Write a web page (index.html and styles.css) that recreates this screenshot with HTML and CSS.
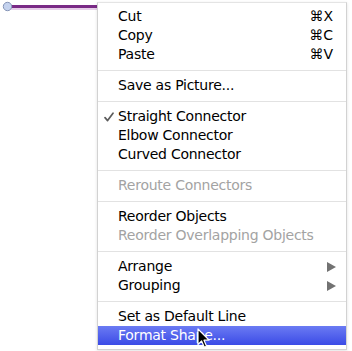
FILE: index.html
```html
<!DOCTYPE html>
<html>
<head>
<meta charset="utf-8">
<link rel="stylesheet" href="styles.css">
</head>
<body>
<div class="canvas">
  <svg class="connector" width="120" height="14" viewBox="0 0 120 14">
    <rect x="8" y="8" width="112" height="2" fill="#e6cfe9"/>
    <rect x="8" y="5" width="112" height="3" fill="#7a2a86"/>
    <circle cx="7.5" cy="6.5" r="4.2" fill="#c4d2ee" stroke="#8594b6" stroke-width="1"/>
  </svg>
  <div class="menu">
    <div class="item"><span class="check"></span><span class="label">Cut</span><span class="key">⌘X</span></div>
    <div class="item"><span class="check"></span><span class="label">Copy</span><span class="key">⌘C</span></div>
    <div class="item"><span class="check"></span><span class="label">Paste</span><span class="key">⌘V</span></div>
    <div class="sep"></div>
    <div class="item"><span class="check"></span><span class="label">Save as Picture...</span></div>
    <div class="sep"></div>
    <div class="item"><span class="check"><svg class="tick" width="10" height="10" viewBox="0 0 10 10"><path d="M1 5.6 L3.6 8.6 L9 1.2" fill="none" stroke="#5c5c5c" stroke-width="1.7" stroke-linecap="round" stroke-linejoin="round"/></svg></span><span class="label">Straight Connector</span></div>
    <div class="item"><span class="check"></span><span class="label">Elbow Connector</span></div>
    <div class="item"><span class="check"></span><span class="label">Curved Connector</span></div>
    <div class="sep"></div>
    <div class="item disabled"><span class="check"></span><span class="label">Reroute Connectors</span></div>
    <div class="sep"></div>
    <div class="item"><span class="check"></span><span class="label">Reorder Objects</span></div>
    <div class="item disabled"><span class="check"></span><span class="label">Reorder Overlapping Objects</span></div>
    <div class="sep"></div>
    <div class="item"><span class="check"></span><span class="label">Arrange</span><span class="arrow"></span></div>
    <div class="item"><span class="check"></span><span class="label">Grouping</span><span class="arrow"></span></div>
    <div class="sep"></div>
    <div class="item"><span class="check"></span><span class="label">Set as Default Line</span></div>
    <div class="item selected"><span class="check"></span><span class="label">Format Shape...</span></div>
  </div>
  <svg class="cursor" width="14" height="22" viewBox="0 0 14 22">
    <path d="M1 1 L1 16.5 L4.6 13 L7.3 19.3 L9.6 18.3 L7 12.2 L12 12.2 Z" fill="#000" stroke="#fff" stroke-width="1.2" stroke-linejoin="round"/>
  </svg>
</div>
</body>
</html>
```

FILE: styles.css
```css
html, body {
  margin: 0;
  padding: 0;
  background: #ffffff;
}
.canvas {
  position: relative;
  width: 352px;
  height: 351px;
  overflow: hidden;
  padding-top: 2px;
  box-sizing: border-box;
}
.connector {
  position: absolute;
  left: 0;
  top: 0;
}
.menu {
  position: relative;
  margin-left: 97px;
  width: 248px;
  border: 1px solid #d2d2d2;
  border-top-color: #e4e4e4;
  background: #ffffff;
  box-shadow: 0 1px 3px rgba(0,0,0,0.12);
  padding: 4px 0 4px;
  font-family: "DejaVu Sans", "Liberation Sans", sans-serif;
  font-size: 14px;
  letter-spacing: -0.25px;
  color: #000;
}
.item {
  display: flex;
  align-items: center;
  height: 19px;
  line-height: 19px;
  padding-right: 13px;
}
.check {
  width: 20px;
  height: 19px;
  flex: none;
  box-sizing: border-box;
  padding-left: 6px;
  display: flex;
  align-items: center;
}
.tick {
  display: block;
}
.label {
  flex: 1;
  white-space: nowrap;
}
.key {
  flex: none;
  letter-spacing: 0;
}
.arrow {
  flex: none;
  width: 0;
  height: 0;
  margin-right: -3px;
  border-top: 5px solid transparent;
  border-bottom: 5px solid transparent;
  border-left: 9px solid #727272;
}
.disabled {
  color: #a3a3a3;
}
.selected {
  background: linear-gradient(#6b7bf3, #3b4be6);
  color: #ffffff;
}
.sep {
  height: 1px;
  margin: 6px 0 5px;
  background: #e2e2e2;
}
.cursor {
  position: absolute;
  left: 197px;
  top: 328px;
}
```
